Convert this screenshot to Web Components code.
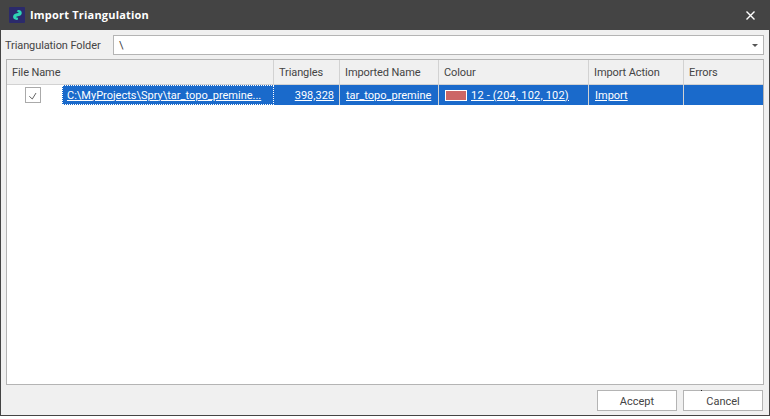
<!DOCTYPE html>
<html>
<head>
<meta charset="utf-8">
<style>
    html, body { margin: 0; padding: 0; background: #fff; }
    body { font: 11px Roboto, "Liberation Sans", sans-serif; color: #444; }
</style>
</head>
<body>
<import-dialog title-text="Import Triangulation">
    <folder-row label="Triangulation Folder" value="\"></folder-row>
    <tri-grid></tri-grid>
    <dialog-button slot="buttons">Accept</dialog-button>
    <dialog-button slot="buttons" speck>Cancel</dialog-button>
</import-dialog>

<script>
const dialogTemplate = document.createElement('template');
dialogTemplate.innerHTML = `
    <style>
        :host { display: flex; flex-direction: column; width: 770px; height: 416px; box-sizing: border-box; background: #f0f0f0; border: solid #444; border-width: 0 1px 1px 1px; }
        .titlebar { display: flex; align-items: center; height: 30px; background: #444; margin: 0 -1px; padding: 0 15px 0 9px; box-sizing: border-box; color: #fff; font: 700 11px "Open Sans", sans-serif; letter-spacing: .2px; }
        .titlebar svg.logo { width: 16px; height: 16px; margin-right: 5px; }
        .titlebar span { flex: 1; padding-bottom: 1px; }
        .titlebar svg.close { width: 9px; height: 9px; }
        .body { flex: 1; display: flex; flex-direction: column; padding: 5px 5px 0 5px; min-height: 0; }
        .buttons { display: flex; justify-content: flex-end; gap: 6px; padding: 5px 1px 4px 0; }
    </style>
    <div class="titlebar">
        <svg class="logo" viewBox="0 0 16 16">
            <rect width="16" height="16" rx="1" fill="#2b2a6b"/>
            <path d="M8.500 3.200c2.600-.6 4.600 1 4.200 3.200-.3 1.500-1.400 2.300-2.700 2.600L7.800 9.600c-.5.200-.6.800-.2 1 .5.300 1 .2 1.500 0l-.2 2.200c-2.800.5-5-.8-4.800-3.200.1-1.600 1.300-2.600 2.800-3l2.100-.6c.6-.2.600-.8.200-1.100-.5-.3-1-.2-1.500 0z" fill="#2fd4b4"/>
        </svg>
        <span></span>
        <svg class="close" viewBox="0 0 9 9"><path d="M.5.500l8 8M8.500.500l-8 8" stroke="#fff" stroke-width="1.400" fill="none"/></svg>
    </div>
    <div class="body">
        <slot></slot>
        <div class="buttons"><slot name="buttons"></slot></div>
    </div>
`;

class ImportDialog extends HTMLElement {
    constructor() {
        super();
        this.attachShadow({ mode: 'open' });
        this.shadowRoot.appendChild(dialogTemplate.content.cloneNode(true));
        this.shadowRoot.querySelector('.titlebar span').textContent = this.getAttribute('title-text');
    }
}
customElements.define('import-dialog', ImportDialog);

const folderTemplate = document.createElement('template');
folderTemplate.innerHTML = `
    <style>
        :host { display: flex; align-items: center; height: 20px; margin-bottom: 4px; }
        label { width: 108px; margin-left: -1px; color: #444; letter-spacing: -.1px; }
        .combo { flex: 1; height: 20px; box-sizing: border-box; background: #fff; border: 1px solid #b4b4b4; display: flex; align-items: center; padding: 0 5px; }
        .combo span { flex: 1; }
        .arrow { width: 0; height: 0; border: solid transparent; border-width: 3px 3px 0 3px; border-top-color: #555; }
    </style>
    <label></label>
    <div class="combo"><span></span><div class="arrow"></div></div>
`;

class FolderRow extends HTMLElement {
    constructor() {
        super();
        this.attachShadow({ mode: 'open' });
        this.shadowRoot.appendChild(folderTemplate.content.cloneNode(true));
        this.shadowRoot.querySelector('label').textContent = this.getAttribute('label');
        this.shadowRoot.querySelector('.combo span').textContent = this.getAttribute('value');
    }
}
customElements.define('folder-row', FolderRow);

const gridTemplate = document.createElement('template');
gridTemplate.innerHTML = `
    <style>
        :host { display: block; flex: 1; min-height: 0; box-sizing: border-box; background: #fff; border: 1px solid #b4b4b4; }
        .row { display: grid; grid-template-columns: 267px 66px 99px 150px 95px 1fr; }
        .head { height: 25px; box-sizing: border-box; background: #f0f0f0; border-bottom: 1px solid #d2d2d2; letter-spacing: -.1px; }
        .head div { display: flex; align-items: center; padding: 0 5px; border-right: 1px solid #d2d2d2; }
        .head div:last-child { border-right: 0; }
        .data { height: 20px; background: #1a6acb; color: #fff; }
        .data > div { display: flex; align-items: center; padding: 0 5px 0 6px; border-right: 1px solid #d2d2d2; text-decoration: underline; white-space: nowrap; min-width: 0; }
        .data > div:last-child { border-right: 0; }
        .data .num { justify-content: flex-end; padding-right: 5px; }
        .file { padding: 0 !important; text-decoration: none !important; background: #fff; border-right: 0 !important; }
        .check-cell { width: 55px; display: flex; justify-content: center; align-items: center; flex: none; }
        .check { width: 16px; height: 16px; box-sizing: border-box; border: 1px solid #aaa; background: #fff; display: flex; margin-left: -3px; }
        .path { flex: 1; align-self: stretch; display: flex; align-items: center; background: #1a6acb; outline: 1px dotted #fff; outline-offset: -1px; padding-left: 5px; text-decoration: underline; }
        .swatch { width: 20px; height: 9px; border: 1px solid #fff; background: #cc6666; margin-right: 4px; flex: none; }
        .data .u { text-decoration: underline; letter-spacing: .2px; }
    </style>
    <div class="row head">
        <div>File Name</div><div>Triangles</div><div>Imported Name</div><div>Colour</div><div>Import Action</div><div>Errors</div>
    </div>
    <div class="row data">
        <div class="file">
            <div class="check-cell"><div class="check">
                <svg width="14" height="14" viewBox="0 0 14 14"><path d="M3.300 8.300l3 2.700 3.700-6" stroke="#666" stroke-width="1" fill="none"/></svg>
            </div></div>
            <div class="path">C:\\MyProjects\\Spry\\tar_topo_premine...</div>
        </div>
        <div class="num">398,328</div>
        <div>tar_topo_premine</div>
        <div><span class="swatch"></span><span class="u">12 - (204, 102, 102)</span></div>
        <div>Import</div>
        <div></div>
    </div>
`;

class TriGrid extends HTMLElement {
    constructor() {
        super();
        this.attachShadow({ mode: 'open' });
        this.shadowRoot.appendChild(gridTemplate.content.cloneNode(true));
    }
}
customElements.define('tri-grid', TriGrid);

const buttonTemplate = document.createElement('template');
buttonTemplate.innerHTML = `
    <style>
        :host { position: relative; display: flex; align-items: center; justify-content: center; width: 80px; height: 21px; box-sizing: border-box; padding-top: 2px; background: #fff; border: 1px solid #b4b4b4; color: #444; }
        /* the reference has a stray dark pixel on the top edge of this button */
        :host([speck])::before { content: ""; position: absolute; left: 17px; top: -1px; width: 1px; height: 1px; background: #222; }
    </style>
    <slot></slot>
`;

class DialogButton extends HTMLElement {
    constructor() {
        super();
        this.attachShadow({ mode: 'open' });
        this.shadowRoot.appendChild(buttonTemplate.content.cloneNode(true));
    }
}
customElements.define('dialog-button', DialogButton);
</script>
</body>
</html>
